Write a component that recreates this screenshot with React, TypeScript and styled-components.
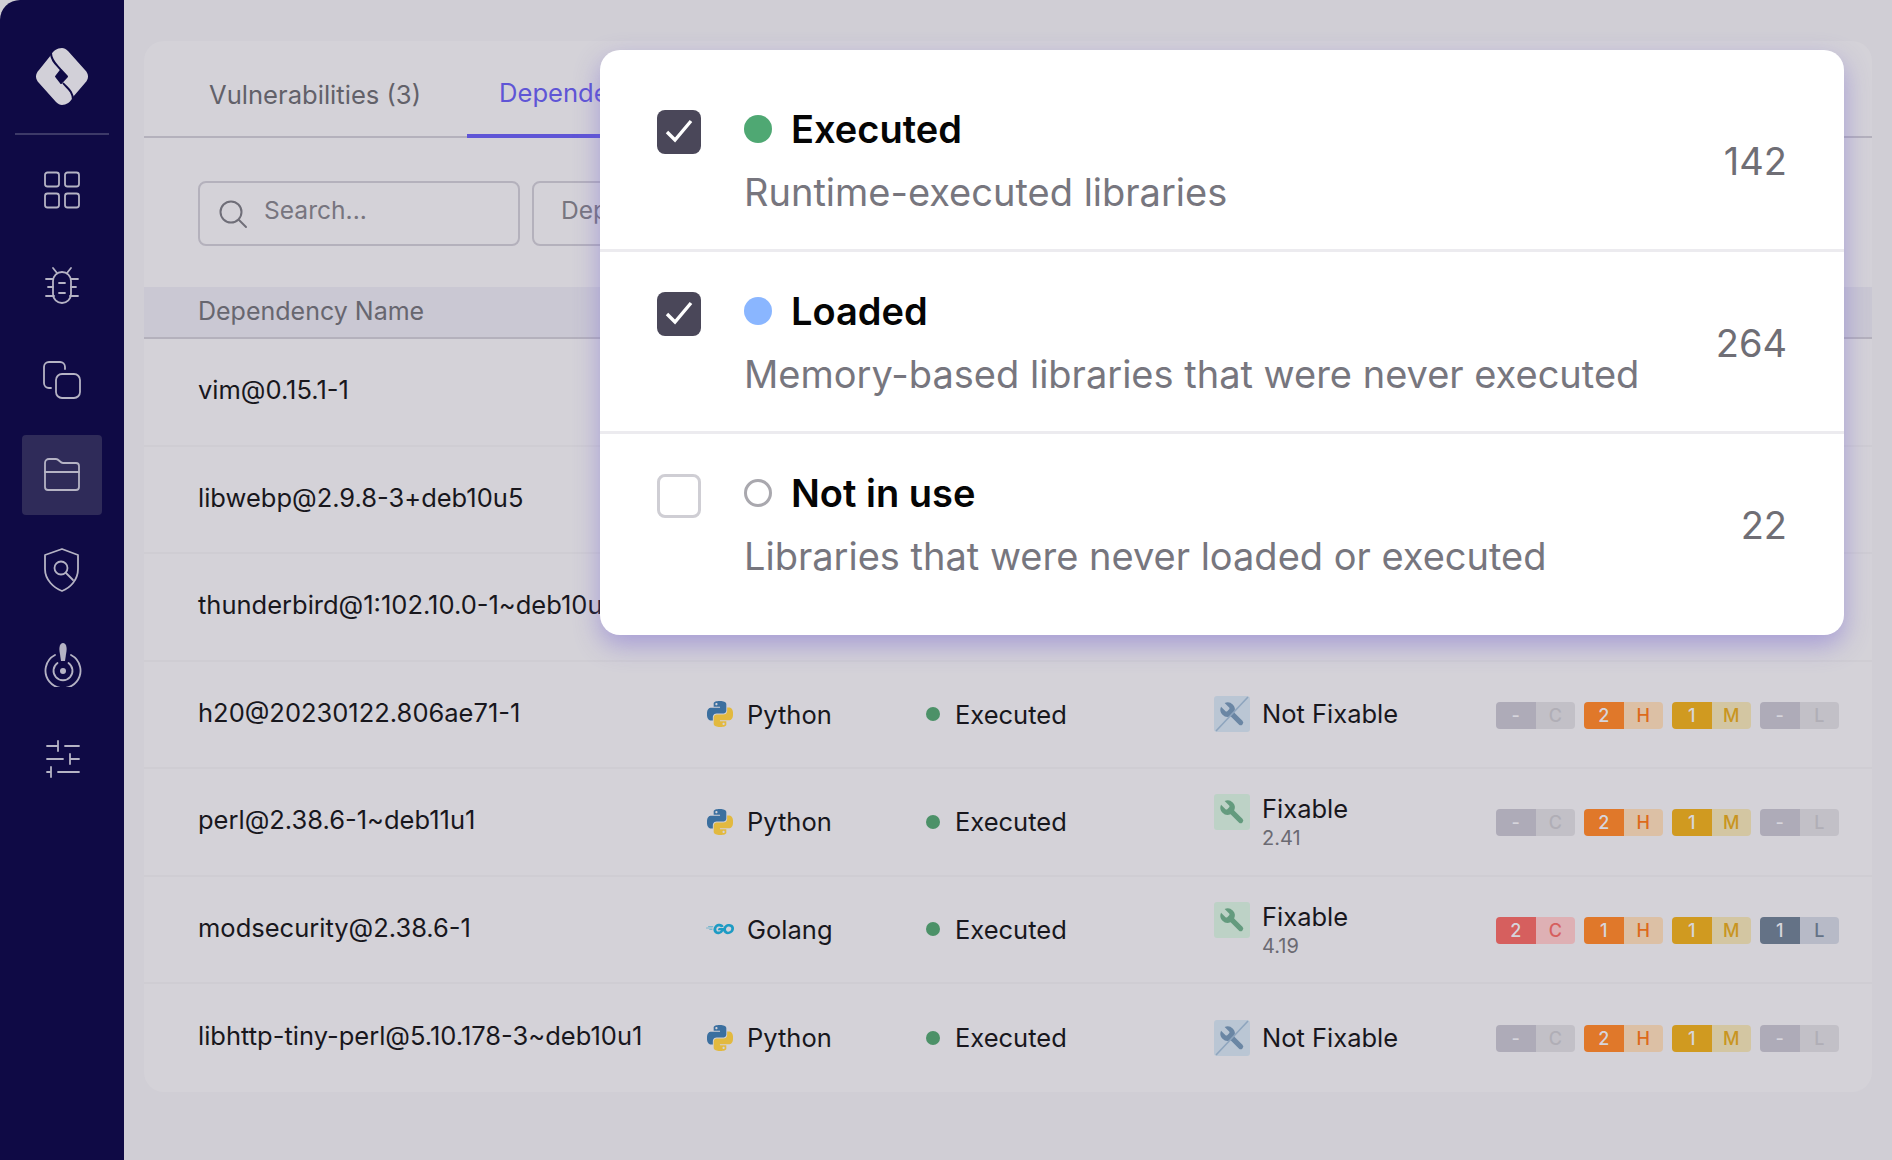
import React from 'react';
import styled, { createGlobalStyle } from 'styled-components';
import { SiGo } from 'react-icons/si';

const GlobalStyle = createGlobalStyle`
  html, body {
    margin: 0;
    background: #d0ced5;
    font-family: Inter, "Noto Sans", sans-serif;
  }
  * { box-sizing: border-box; }
`;

const Page = styled.div`
  position: relative;
  display: flex;
  width: 1892px;
  height: 1160px;
  overflow: hidden;
`;

const Sidebar = styled.nav`
  width: 124px;
  flex: none;
  display: flex;
  flex-direction: column;
  align-items: center;
  background: #0f0a45;
  border-top-left-radius: 20px;
  padding-top: 48px;
`;

const LogoWrap = styled.div`
  height: 87px;
  width: 94px;
  display: flex;
  justify-content: center;
  align-items: flex-start;
  border-bottom: 2px solid #3d3a68;
`;

const NavList = styled.div`
  display: flex;
  flex-direction: column;
  align-items: center;
  margin-top: 15px;
  gap: 15px;
`;

const NavItem = styled.div<{ $active?: boolean }>`
  width: 80px;
  height: 80px;
  display: flex;
  align-items: center;
  justify-content: center;
  border-radius: 4px;
  background: ${p => (p.$active ? '#2f2b59' : 'transparent')};
  color: #b5b3c4;
`;

const Main = styled.main`
  flex: 1;
  padding: 41px 20px 68px;
`;

const Card = styled.section`
  height: 100%;
  background: #d4d2d8;
  border-radius: 20px;
  overflow: hidden;
`;

const Tabs = styled.div`
  display: flex;
  height: 97px;
  padding-left: 33px;
  gap: 14px;
  border-bottom: 2px solid #b4b1bc;
`;

const Tab = styled.div<{ $active?: boolean }>`
  display: flex;
  align-items: center;
  height: 97px;
  padding: 10px 32px 0;
  font-size: 25.6px;
  white-space: nowrap;
  color: ${p => (p.$active ? '#5f55d6' : '#626169')};
  border-bottom: ${p => (p.$active ? '4px solid #5f55d6' : 'none')};
`;

const Toolbar = styled.div`
  display: flex;
  gap: 12px;
  height: 149px;
  padding: 43px 0 0 54px;
`;

const SearchBox = styled.div`
  display: flex;
  align-items: center;
  gap: 16px;
  width: 322px;
  height: 65px;
  padding: 0 18px;
  border: 2px solid #b4b1bc;
  border-radius: 8px;
  color: #77757f;
  font-size: 24.6px;
`;

const SearchText = styled.span`
  margin-top: -7px;
`;

const FilterBox = styled(SearchBox)`
  width: 300px;
  padding-left: 27px;
`;

const TableHead = styled.div`
  height: 52px;
  padding: 0 54px 2px;
  display: flex;
  align-items: center;
  background: #cac8d3;
  border-bottom: 2px solid #b4b1bc;
  color: #67666f;
  font-size: 25px;
`;

const Row = styled.div`
  height: 107.5px;
  display: grid;
  grid-template-columns: 508px 219px 289px 282px 1fr;
  align-items: center;
  padding-left: 54px;
  border-bottom: 2px solid #cfcdd3;
  color: #18171d;
  font-size: 25.5px;
  &:last-child { border-bottom: none; }
`;

const NameCell = styled.div`
  white-space: nowrap;
  margin-top: -4px;
`;

const LangCell = styled.div`
  display: flex;
  align-items: center;
  gap: 13px;
`;

const LangIcon = styled.span`
  width: 28px;
  height: 28px;
  display: flex;
  align-items: center;
  justify-content: center;
  color: #1d9bc4;
`;

const StatusCell = styled.div`
  display: flex;
  align-items: center;
  gap: 16px;
`;

const StatusDot = styled.span`
  width: 14px;
  height: 14px;
  margin-left: 1px;
  margin-right: -1px;
  border-radius: 50%;
  background: #4c9168;
`;

const FixCell = styled.div`
  display: flex;
  align-items: flex-start;
  gap: 12px;
`;

const FixIcon = styled.span<{ $fixable: boolean }>`
  width: 36px;
  height: 36px;
  flex: none;
  display: flex;
  align-items: center;
  justify-content: center;
  border-radius: 3px;
  background: ${p => (p.$fixable ? '#bdd2c6' : '#bac6d4')};
  color: ${p => (p.$fixable ? '#649b7e' : '#6a86a4')};
`;

const FixLabel = styled.div<{ $stacked: boolean }>`
  line-height: ${p => (p.$stacked ? '30px' : '36px')};
`;

const FixVersion = styled.div`
  margin-top: 3px;
  font-size: 20px;
  line-height: 22px;
  color: #6b6a72;
`;

const Badges = styled.div`
  display: flex;
  gap: 9px;
  margin-top: 2px;
`;

const levelColors: Record<string, { strong: string; soft: string; text: string }> = {
  C: { strong: '#d65f5e', soft: '#deb0b4', text: '#d65f5e' },
  H: { strong: '#e0782a', soft: '#dcc0a5', text: '#dd6a1c' },
  M: { strong: '#d09a20', soft: '#d3c6a2', text: '#c9951f' },
  L: { strong: '#647286', soft: '#b7bac7', text: '#647286' },
};

const Badge = styled.div<{ $level: string; $empty: boolean }>`
  display: grid;
  grid-template-columns: 1fr 1fr;
  width: 79px;
  height: 27px;
  border-radius: 4px;
  overflow: hidden;
  font-size: 18px;
  font-weight: 500;
  line-height: 27px;
  text-align: center;
  & > span:first-child {
    background: ${p => (p.$empty ? '#aeabb8' : levelColors[p.$level].strong)};
    color: #d6d5dc;
  }
  & > span:last-child {
    background: ${p => (p.$empty ? '#c2c0c7' : levelColors[p.$level].soft)};
    color: ${p => (p.$empty ? '#b0aeb6' : levelColors[p.$level].text)};
  }
`;

const Popover = styled.div`
  position: absolute;
  left: 600px;
  top: 50px;
  width: 1244px;
  height: 585px;
  background: #fff;
  border-radius: 20px;
  box-shadow: 0 10px 26px rgba(110, 90, 210, 0.45);
  overflow: hidden;
`;

const Option = styled.div<{ $height: number }>`
  height: ${p => p.$height}px;
  display: flex;
  align-items: flex-start;
  padding: 40px 57px 0 57px;
  border-bottom: 3px solid #ecebef;
  &:first-child { padding-top: 60px; }
  &:last-child { border-bottom: none; }
`;

const CheckBox = styled.span<{ $checked: boolean }>`
  width: 44px;
  height: 44px;
  flex: none;
  display: flex;
  align-items: center;
  justify-content: center;
  border-radius: 8px;
  background: ${p => (p.$checked ? '#4a4759' : '#fff')};
  border: ${p => (p.$checked ? 'none' : '3px solid #cfced4')};
  color: #fff;
`;

const OptionBody = styled.div`
  flex: 1;
  margin-left: 43px;
`;

const OptionTitle = styled.div`
  display: flex;
  align-items: center;
  gap: 19px;
  height: 38px;
  font-size: 38px;
  font-weight: 600;
  color: #050505;
`;

const Dot = styled.span<{ $color?: string }>`
  width: 28px;
  height: 28px;
  border-radius: 50%;
  background: ${p => p.$color ?? 'transparent'};
  border: ${p => (p.$color ? 'none' : '3px solid #a9a8ae')};
`;

const OptionDesc = styled.div`
  margin-top: 22px;
  font-size: 38px;
  line-height: 44px;
  color: #77767e;
  white-space: nowrap;
`;

const OptionCount = styled.div`
  margin-top: 29px;
  font-size: 38px;
  line-height: 44px;
  color: #6f6e75;
`;

const NavIcon = ({ offset = 0, children }: { offset?: number; children: React.ReactNode }) => (
  <svg width="40" height="40" viewBox={`0 ${offset} 40 40`} fill="none" stroke="currentColor" strokeWidth="1.8" strokeLinecap="round" strokeLinejoin="round">
    {children}
  </svg>
);

const Logo = () => (
  <svg width="52" height="57" viewBox="0 0 52 57">
    <path
      d="M15 7 C17 3 21 0 26 0 C28 0 30 1 32 3 L49 22 C53 26 53 31 49 35 L37 49 C35 54 30 57 26 57 C24 57 22 56 20 54 L3 35 C-1 31 -1 26 3 22 Z"
      fill="#d2d0d8"
    />
    <path d="M15 5 C15 13 21 17 25 22 M27 35 C31 40 37 43 37 52" fill="none" stroke="#0f0a45" strokeWidth="2" />
    <path d="M25 22 L31 28.5 L25 35 L20 28.5 Z" fill="#0f0a45" stroke="#0f0a45" strokeWidth="2" strokeLinejoin="round" />
  </svg>
);

const PythonLogo = () => (
  <svg width="26" height="26" viewBox="0 0 24 24">
    <path
      fill="#3b6f9f"
      d="M14.25.18l.9.2.73.26.59.3.45.32.34.34.25.34.16.33.1.3.04.26.02.2-.01.13V8.5l-.05.63-.13.55-.21.46-.26.38-.3.31-.33.25-.35.19-.35.14-.33.1-.3.07-.26.04-.21.02H8.77l-.69.05-.59.14-.5.22-.41.27-.33.32-.27.35-.2.36-.15.37-.1.35-.07.32-.04.27-.02.21v3.06H3.17l-.21-.03-.28-.07-.32-.12-.35-.18-.36-.26-.36-.36-.35-.46-.32-.59-.28-.73-.21-.88-.14-1.05-.05-1.23.06-1.22.16-1.04.24-.87.32-.71.36-.57.4-.44.42-.33.42-.24.4-.16.36-.1.32-.05.24-.01h.16l.06.01h8.16v-.83H6.18l-.01-2.75-.02-.37.05-.34.11-.31.17-.28.25-.26.31-.23.38-.2.44-.18.51-.15.58-.12.64-.1.71-.06.77-.04.84-.02 1.27.05zM7.95 2.16l-.23.33-.08.41.08.41.23.34.33.22.41.09.41-.09.33-.22.23-.34.08-.41-.08-.41-.23-.33-.33-.22-.41-.09-.41.09z"
    />
    <path
      fill="#e2b93f"
      d="M21.04 6.11l.28.06.32.12.35.18.36.27.36.35.35.47.32.59.28.73.21.88.14 1.04.05 1.23-.06 1.23-.16 1.04-.24.86-.32.71-.36.57-.4.45-.42.33-.42.24-.4.16-.36.09-.32.05-.24.02-.16-.01h-8.22v.82h5.84l.01 2.76.02.36-.05.34-.11.31-.17.29-.25.25-.31.24-.38.2-.44.17-.51.15-.58.13-.64.09-.71.07-.77.04-.84.01-1.27-.04-1.07-.14-.9-.2-.73-.25-.59-.3-.45-.33-.34-.34-.25-.34-.16-.33-.1-.3-.04-.25-.02-.2.01-.13v-5.34l.05-.64.13-.54.21-.46.26-.38.3-.32.33-.24.35-.2.35-.14.33-.1.3-.06.26-.04.21-.02.13-.01h5.84l.69-.05.59-.14.5-.21.41-.28.33-.32.27-.35.2-.36.15-.36.1-.35.07-.32.04-.28.02-.21V6.07h2.09l.14.01zM14.57 20.36l-.23.33-.08.41.08.41.23.33.33.23.41.08.41-.08.33-.23.23-.33.08-.41-.08-.41-.23-.33-.33-.23-.41-.08-.41.08z"
    />
  </svg>
);

const WrenchIcon = ({ slashed }: { slashed: boolean }) => (
  <svg width="36" height="36" viewBox="0 0 36 36">
    <g transform="translate(32.8 4) scale(-1.2 1.2)">
      <path
        fill="currentColor"
        d="M14.7 6.3a1 1 0 0 0 0 1.4l1.6 1.6a1 1 0 0 0 1.4 0l3.77-3.77a6 6 0 0 1-7.94 7.94l-6.91 6.91a2.12 2.12 0 0 1-3-3l6.91-6.91a6 6 0 0 1 7.94-7.94l-3.76 3.76z"
      />
    </g>
    {slashed && <path d="M34 1 L2 35" stroke="#8ea5be" strokeWidth="1.6" />}
  </svg>
);

const Check = () => (
  <svg width="28" height="28" viewBox="0 0 28 28" fill="none" stroke="currentColor" strokeWidth="3.4">
    <path d="M2 14 L10 22 L26 3" />
  </svg>
);

type Dep = {
  name: string;
  lang?: 'Python' | 'Golang';
  fix?: string;
  counts?: string[];
};

// the first three rows sit under the popover, only their names show
const deps: Dep[] = [
  { name: 'vim@0.15.1-1' },
  { name: 'libwebp@2.9.8-3+deb10u5' },
  { name: 'thunderbird@1:102.10.0-1~deb10u1' },
  { name: 'h20@20230122.806ae71-1', lang: 'Python', counts: ['-', '2', '1', '-'] },
  { name: 'perl@2.38.6-1~deb11u1', lang: 'Python', fix: '2.41', counts: ['-', '2', '1', '-'] },
  { name: 'modsecurity@2.38.6-1', lang: 'Golang', fix: '4.19', counts: ['2', '1', '1', '1'] },
  { name: 'libhttp-tiny-perl@5.10.178-3~deb10u1', lang: 'Python', counts: ['-', '2', '1', '-'] },
];

const options = [
  { title: 'Executed', desc: 'Runtime-executed libraries', count: 142, checked: true, color: '#4fa873', height: 202 },
  { title: 'Loaded', desc: 'Memory-based libraries that were never executed', count: 264, checked: true, color: '#8ab6ff', height: 182 },
  { title: 'Not in use', desc: 'Libraries that were never loaded or executed', count: 22, checked: false, height: 201 },
];

const levels = ['C', 'H', 'M', 'L'];

export default function App() {
  return (
    <Page>
      <GlobalStyle />
      <Sidebar>
        <LogoWrap><Logo /></LogoWrap>
        <NavList>
          <NavItem>
            <NavIcon>
              <rect x="3" y="2.5" width="14" height="14" rx="2.5" />
              <rect x="23" y="2.5" width="14" height="14" rx="2.5" />
              <rect x="3" y="23.5" width="14" height="14" rx="2.5" />
              <rect x="23" y="23.5" width="14" height="14" rx="2.5" />
            </NavIcon>
          </NavItem>
          <NavItem>
            <NavIcon offset={-1}>
              <rect x="11" y="6" width="18" height="31" rx="9" />
              <path d="M11 2 L15 7 M29 2 L25 7 M4 13 H11 M29 13 H36 M6 21 H11 M29 21 H34 M4 30 H12 M28 30 H36 M17 17 H23 M17 27 H23" />
            </NavIcon>
          </NavItem>
          <NavItem>
            <NavIcon>
              <path d="M9 28 H7 A5 5 0 0 1 2 23 V7 A5 5 0 0 1 7 2 H18 A5 5 0 0 1 23 7 V9" />
              <rect x="14" y="14" width="24" height="24" rx="6" />
            </NavIcon>
          </NavItem>
          <NavItem $active>
            <NavIcon>
              <path d="M3 16 V8 A4 4 0 0 1 7 4 H14 C17 4 18 8 21 8 H34 A3 3 0 0 1 37 11 V32 A3 3 0 0 1 34 35 H6 A3 3 0 0 1 3 32 Z" />
              <path d="M3 17 H37" />
            </NavIcon>
          </NavItem>
          <NavItem>
            <svg width="40" height="48" viewBox="0 0 40 48" fill="none" stroke="currentColor" strokeWidth="1.8" strokeLinecap="round" strokeLinejoin="round">
              <path d="M20 3 L36 9 V23 C36 34 28 42 20 45 C12 42 3 34 3 23 V9 Z" />
              <circle cx="19" cy="22" r="6.5" />
              <path d="M24 27 L31 34" />
            </svg>
          </NavItem>
          <NavItem>
            <svg width="40" height="44" viewBox="-1 1 40 44" fill="none" stroke="currentColor" strokeWidth="1.8" strokeLinecap="round">
              <path d="M12 13 A17.5 17.5 0 1 0 28 13" />
              <path d="M14.5 21 A9.5 9.5 0 1 0 25.5 21" />
              <circle cx="20" cy="29" r="3" fill="currentColor" stroke="none" />
              <path d="M20 1 C23 1 24 5 23.5 9 L22 19 H18 L16.5 9 C16 5 17 1 20 1 Z" fill="currentColor" stroke="none" />
            </svg>
          </NavItem>
          <NavItem>
            <NavIcon offset={1}>
              <path d="M5 7 H16 M16 2 V12 M23 7 H37 M5 20 H21 M28 15 V25 M28 20 H37 M5 33 H9 M9 28 V38 M16 33 H37" />
            </NavIcon>
          </NavItem>
        </NavList>
      </Sidebar>

      <Main>
        <Card>
          <Tabs>
            <Tab>Vulnerabilities (3)</Tab>
            <Tab $active>Dependencies (428)</Tab>
          </Tabs>
          <Toolbar>
            <SearchBox>
              <svg width="30" height="30" viewBox="0 0 30 30" fill="none" stroke="#6f6e78" strokeWidth="2" strokeLinecap="round">
                <circle cx="13" cy="13" r="10.5" />
                <path d="M21 21 L28 28" />
              </svg>
              <SearchText>Search...</SearchText>
            </SearchBox>
            <FilterBox><SearchText>Dependency</SearchText></FilterBox>
          </Toolbar>
          <TableHead>Dependency Name</TableHead>
          {deps.map(dep => (
            <Row key={dep.name}>
              <NameCell>{dep.name}</NameCell>
              {dep.lang && (
                <>
                  <LangCell>
                    <LangIcon>{dep.lang === 'Python' ? <PythonLogo /> : <SiGo size={34} />}</LangIcon>
                    {dep.lang}
                  </LangCell>
                  <StatusCell><StatusDot />Executed</StatusCell>
                  <FixCell>
                    <FixIcon $fixable={!!dep.fix}><WrenchIcon slashed={!dep.fix} /></FixIcon>
                    <div>
                      <FixLabel $stacked={!!dep.fix}>{dep.fix ? 'Fixable' : 'Not Fixable'}</FixLabel>
                      {dep.fix && <FixVersion>{dep.fix}</FixVersion>}
                    </div>
                  </FixCell>
                  <Badges>
                    {levels.map((level, i) => (
                      <Badge key={level} $level={level} $empty={dep.counts?.[i] === '-'}>
                        <span>{dep.counts?.[i]}</span>
                        <span>{level}</span>
                      </Badge>
                    ))}
                  </Badges>
                </>
              )}
            </Row>
          ))}
        </Card>
      </Main>

      <Popover>
        {options.map(option => (
          <Option key={option.title} $height={option.height}>
            <CheckBox $checked={option.checked}>{option.checked && <Check />}</CheckBox>
            <OptionBody>
              <OptionTitle><Dot $color={option.color} />{option.title}</OptionTitle>
              <OptionDesc>{option.desc}</OptionDesc>
            </OptionBody>
            <OptionCount>{option.count}</OptionCount>
          </Option>
        ))}
      </Popover>
    </Page>
  );
}
